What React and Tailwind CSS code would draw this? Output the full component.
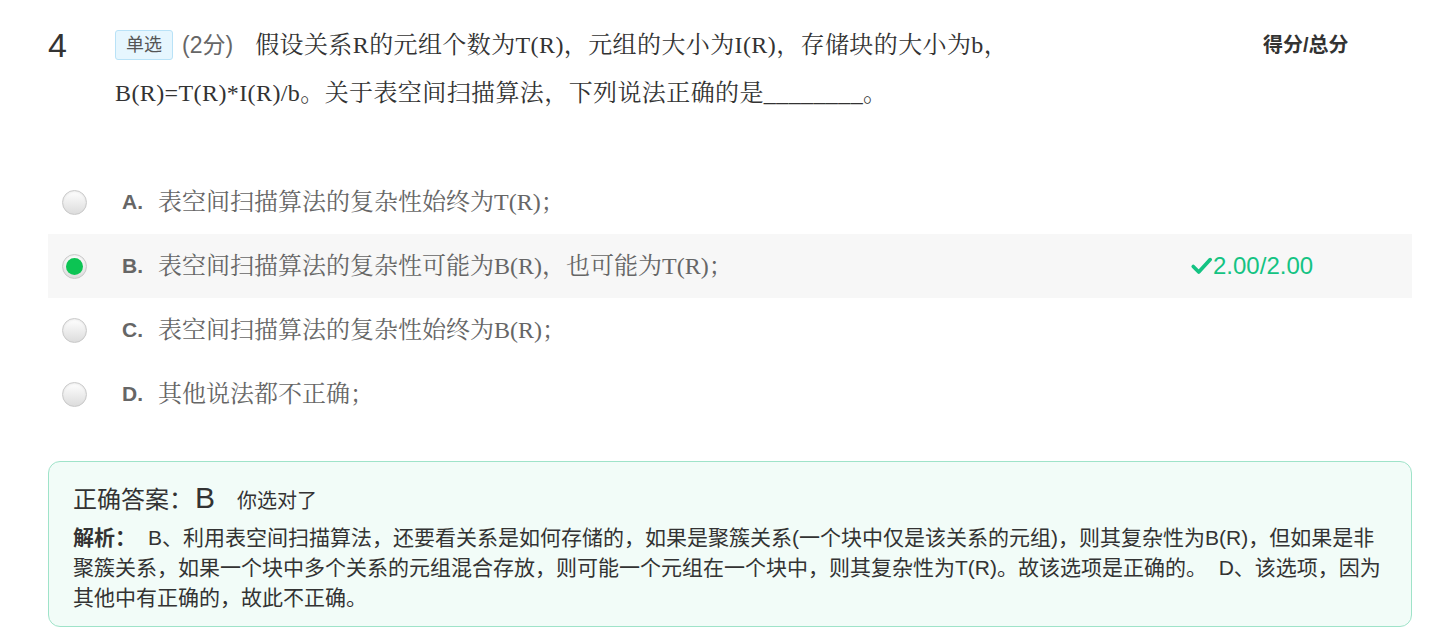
import React from 'react';

const serif = 'font-["Liberation_Serif","Noto_Serif_CJK_SC","Noto_Sans_CJK_SC",serif]';
const sans = 'font-["Liberation_Sans","Noto_Sans_CJK_SC",sans-serif]';

const options = [
    { key: 'A', text: '表空间扫描算法的复杂性始终为T(R)；' },
    { key: 'B', text: '表空间扫描算法的复杂性可能为B(R)，也可能为T(R)；', checked: true, score: '2.00/2.00' },
    { key: 'C', text: '表空间扫描算法的复杂性始终为B(R)；' },
    { key: 'D', text: '其他说法都不正确；' },
];

const Radio = ({ checked }) => (
    <span className="h-[25px] w-[25px] rounded-full border border-[#c9c9c9] bg-linear-to-b from-[#ffffff] to-[#dcdcdc] shadow-[inset_0_1px_2px_rgba(0,0,0,0.08)] flex items-center justify-center">
        {checked && <span className="h-[17px] w-[17px] rounded-full bg-[#0cc453]" />}
    </span>
);

const App = () => {
    return (
        <div className={`min-h-screen bg-white pl-[48px] pr-[22px] pt-[21px] ${sans}`}>

            {/* QUESTION HEADER */}
            <div className="flex items-start">
                <div className="w-[67px] text-[34px] leading-[48px] text-[#333]">4</div>
                <div className="w-[1000px] text-[24px] leading-[48px]">
                    <span className="inline-block align-middle h-[30px] px-[10px] mr-[9px] rounded-[3px] border border-[#b9e2f7] bg-[#e6f6fe] text-[18px] leading-[28px] text-[#555] relative -top-[2px]">单选</span>
                    <span className="text-[23px] text-[#666]">(2分)</span>
                    <span className={`${serif} text-[#333] ml-[22px] tracking-[0.4px]`}>
                        假设关系R的元组个数为T(R)，元组的大小为I(R)，存储块的大小为b，B(R)=T(R)*I(R)/b。关于表空间扫描算法，下列说法正确的是________。
                    </span>
                </div>
                <div className="ml-auto w-[149px] text-[20px] leading-[48px] font-bold text-[#333]">得分/总分</div>
            </div>

            {/* OPTIONS */}
            <div className="mt-[53px]">
                {options.map(opt => (
                    <div
                        key={opt.key}
                        className={`h-[64px] flex items-center pl-[14px] ${opt.checked ? 'bg-[#f7f7f7]' : ''}`}
                    >
                        <Radio checked={opt.checked} />
                        <span className="ml-[35px] w-[36px] text-[21px] font-bold text-[#666]">{opt.key}.</span>
                        <span className={`${serif} flex-1 text-[24px] text-[#666]`}>{opt.text}</span>
                        <div className="w-[222px]">
                            {opt.score && (
                                <span className="flex items-center text-[24px] text-[#14c383]">
                                    <svg viewBox="0 0 24 24" className="h-[22px] w-[23px]" fill="none" stroke="currentColor" strokeWidth="4" strokeLinecap="round" strokeLinejoin="round">
                                        <path d="M3 12.5l6 6L21.5 5" />
                                    </svg>
                                    {opt.score}
                                </span>
                            )}
                        </div>
                    </div>
                ))}
            </div>

            {/* ANSWER / ANALYSIS */}
            <div className="mt-[35px] rounded-[12px] border border-[#9fe3c9] bg-[#f2fcf8] pl-[24px] pr-[30px] pt-[14px] pb-[13px] text-[#333]">
                <div className="flex items-baseline leading-[44px]">
                    <span className="text-[24px]">正确答案：</span>
                    <span className="text-[30px] ml-[2px]">B</span>
                    <span className="text-[20px] ml-[22px]">你选对了</span>
                </div>
                <p className="text-[21px] leading-[30px]">
                    <span className="font-bold">解析：</span>
                    <span className="ml-[12px]">B、利用表空间扫描算法，还要看关系是如何存储的，如果是聚簇关系(一个块中仅是该关系的元组)，则其复杂性为B(R)，但如果是非聚簇关系，如果一个块中多个关系的元组混合存放，则可能一个元组在一个块中，则其复杂性为T(R)。故该选项是正确的。&nbsp;&nbsp;D、该选项，因为其他中有正确的，故此不正确。</span>
                </p>
            </div>
        </div>
    );
};

export default App;
